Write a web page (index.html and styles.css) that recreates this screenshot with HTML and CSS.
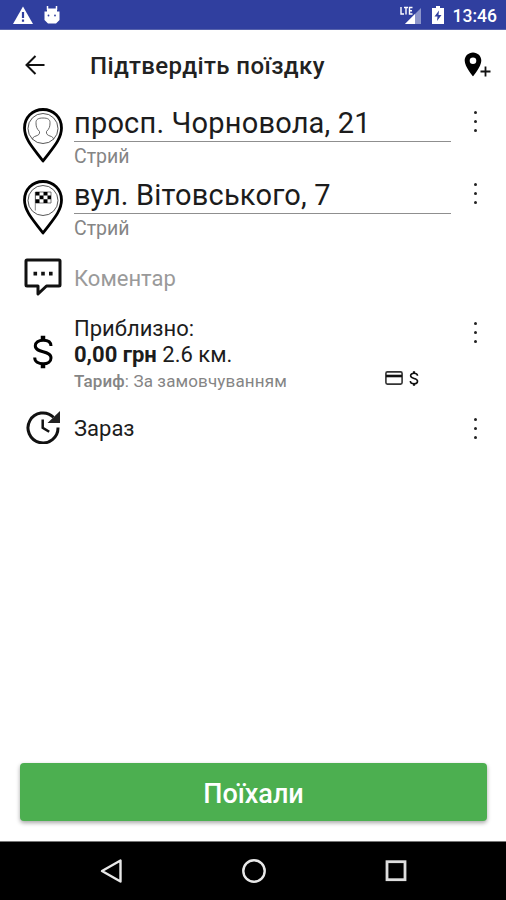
FILE: index.html
```
<!DOCTYPE html>
<html lang="uk">
    <head>
        <meta charset="utf-8">
        <title>Підтвердіть поїздку</title>
        <link rel="stylesheet" href="styles.css">
    </head>
    <body>
        <div class="status">
            <div class="status-left">
                <svg width="20" height="18" viewBox="0 0 20 18"><path d="M10 .5 20 18H0z" fill="#fff"/><path d="M10 6v6M10 13.5v2.2" stroke="#303f9f" stroke-width="2.2"/></svg>
                <svg width="16" height="18" viewBox="0 0 16 18"><path d="M3.500 0v4M12.500 0v4" stroke="#fff" stroke-width="1.5"/><path d="M3 2.5h10v3h2.5V14L12 17.500H4L.5 14V5.500H3z" fill="#fff"/><circle cx="4.500" cy="9.500" r=".9" fill="#303f9f"/><circle cx="11" cy="9.500" r=".9" fill="#303f9f"/></svg>
            </div>
            <div class="status-right">
                <svg width="22" height="19" viewBox="0 0 22 19"><path d="M21 2v16H5z" fill="#8c95ca"/><path d="M15 8v10H5z" fill="#fff"/><path d="M1 1v7h3M4 1.500h4M6 1.500V8.500M12.500 1.500H9.500V8h3M9.500 4.700h2.500" fill="none" stroke="#fff" stroke-width="1.400"/></svg>
                <svg width="12" height="18" viewBox="0 0 12 18"><path d="M4 0h4v2h4v16H0V2h4z" fill="#fff"/><path d="M7 4.500 2.500 10.500H5.500L5 15 9.500 9H6.500z" fill="#303f9f"/></svg>
                <span class="clock">13:46</span>
            </div>
        </div>
        <header>
            <svg class="back" width="20" height="20" viewBox="0 0 20 20"><path d="M19.500 10H2M10.500 1 1.500 10l9 9" fill="none" stroke="#111" stroke-width="2"/></svg>
            <h1>Підтвердіть поїздку</h1>
            <svg class="add" width="28" height="26" viewBox="0 0 28 26"><path d="M9 .5C4.300.5.7 4.100.7 8.700.7 14.500 9 24.300 9 24.300s8.300-9.800 8.300-15.600C17.300 4.100 13.700.5 9 .5zm0 5a3.300 3.300 0 1 1 0 6.600 3.300 3.300 0 0 1 0-6.600z" fill="#000" fill-rule="evenodd"/><path d="M16.500 19.500h10M21.500 14.500v10" stroke="#111" stroke-width="1.800"/></svg>
        </header>
        <main>
            <div class="row address">
                <svg class="icon pin" width="40" height="55" viewBox="0 0 40 55">
                    <path d="M20 1.500C9.500 1.500 1.500 9.600 1.500 20 1.500 32 12 42 20 53 28 42 38.500 32 38.500 20 38.500 9.600 30.500 1.500 20 1.500z" fill="#fff" stroke="#000" stroke-width="2.800" stroke-linejoin="round"/>
                    <circle cx="20" cy="20.500" r="15" fill="none" stroke="#444" stroke-width=".9"/>
                    <path d="M9.500 31.500c0-2 1.500-3 3.500-3.500 2.500-.8 4-2 3.500-4.500-3-3-3.500-5-3.500-9 0-3 2-4.500 7-4.500s7 1.500 7 4.500c0 4-.5 6-3.500 9-.5 2.500 1 3.700 3.500 4.500 2 .5 3.500 1.500 3.500 3.500" fill="none" stroke="#555" stroke-width=".9"/>
                </svg>
                <div class="content">
                    <p class="street">просп. Чорновола, 21</p>
                    <p class="city">Стрий</p>
                </div>
                <div class="more"><i></i><i></i><i></i></div>
            </div>
            <div class="row address">
                <svg class="icon pin" width="40" height="55" viewBox="0 0 40 55">
                    <path d="M20 1.500C9.500 1.500 1.500 9.600 1.500 20 1.500 32 12 42 20 53 28 42 38.500 32 38.500 20 38.500 9.600 30.500 1.500 20 1.500z" fill="#fff" stroke="#000" stroke-width="2.800" stroke-linejoin="round"/>
                    <circle cx="20" cy="20.500" r="15" fill="none" stroke="#444" stroke-width=".9"/>
                    <path d="M12.300 12v18.500" stroke="#888" stroke-width="1"/>
                    <path d="M12.500 12h15.500v11H12.500z" fill="#fff" stroke="#555" stroke-width=".8"/>
                    <path d="M12.500 12h4v3.600h-4zM20.500 12h4v3.600h-4zM16.500 15.600h4v3.700h-4zM24.500 15.600h3.500v3.700h-3.500zM12.500 19.300h4v3.700h-4zM20.500 19.300h4v3.700h-4z"/>
                </svg>
                <div class="content">
                    <p class="street">вул. Вітовського, 7</p>
                    <p class="city">Стрий</p>
                </div>
                <div class="more"><i></i><i></i><i></i></div>
            </div>
            <div class="row comment">
                <svg class="icon" width="38" height="38" viewBox="0 0 38 38"><path d="M3 2h32q1 0 1 1v24q0 1-1 1H22.500L14 36V28H3q-1 0-1-1V3q0-1 1-1z" fill="none" stroke="#111" stroke-width="3" stroke-linejoin="round"/><path d="M9.500 13.800h3.600v3.600H9.500zM17.200 13.800h3.600v3.600h-3.600zM25 13.800h3.600v3.600H25z" fill="#111"/></svg>
                <p class="content">Коментар</p>
            </div>
            <div class="row price">
                <svg class="icon" width="20" height="34" viewBox="0 0 20 34"><path d="M18 11C18 7 14.500 5.200 10.200 5.200 5.500 5.200 2.300 7.500 2.300 10.800c0 8 15.700 4 15.700 12.200 0 3.500-3.200 5.800-7.800 5.800C5.500 28.800 1.700 26.800 1.700 22.500" fill="none" stroke="#000" stroke-width="3"/><path d="M10 .8v4.500M10 28.800v4.500" stroke="#000" stroke-width="4.500"/></svg>
                <div class="content">
                    <p class="approx">Приблизно:</p>
                    <p class="sum"><b>0,00 грн</b> 2.6 км.</p>
                    <div class="tariff">
                        <p><b>Тариф</b>: За замовчуванням</p>
                        <div class="pay">
                            <svg width="18" height="14" viewBox="0 0 18 14"><rect x=".9" y=".9" width="16.200" height="12.200" rx="1.500" fill="#fff" stroke="#333" stroke-width="1.600"/><path d="M1 5h16" stroke="#111" stroke-width="2.600"/></svg>
                            <svg width="10" height="15" viewBox="0 0 20 34"><path d="M18 11C18 7 14.500 5.200 10.200 5.200 5.500 5.200 2.300 7.500 2.300 10.800c0 8 15.700 4 15.700 12.200 0 3.500-3.200 5.800-7.800 5.800C5.500 28.800 1.700 26.800 1.700 22.500" fill="none" stroke="#111" stroke-width="3.600"/><path d="M10 .8v4.500M10 28.800v4.500" stroke="#111" stroke-width="5"/></svg>
                        </div>
                    </div>
                </div>
                <div class="more"><i></i><i></i><i></i></div>
            </div>
            <div class="row time">
                <svg class="icon" width="36" height="34" viewBox="0 0 36 34"><path d="M28.500 7.200A15 15 0 1 0 33 17.500" fill="none" stroke="#111" stroke-width="3"/><path d="M35 1v12H22.500z" fill="#222"/><path d="M17.700 9.500v8.300l6.500 4" fill="none" stroke="#111" stroke-width="2.500"/></svg>
                <p class="content">Зараз</p>
                <div class="more"><i></i><i></i><i></i></div>
            </div>
        </main>
        <button class="go">Поїхали</button>
        <nav>
            <svg width="24" height="26" viewBox="0 0 24 26"><path d="M20.500 2.500v21L2 13z" fill="none" stroke="#e8e8e8" stroke-width="2.400" stroke-linejoin="round"/></svg>
            <svg width="24" height="26" viewBox="0 0 24 26"><circle cx="12" cy="13" r="10.700" fill="none" stroke="#e8e8e8" stroke-width="2.400"/></svg>
            <svg width="24" height="26" viewBox="0 0 24 26"><rect x="3" y="3.700" width="18" height="18" fill="none" stroke="#dedede" stroke-width="2.800"/></svg>
        </nav>
    </body>
</html>
```
FILE: styles.css
```
*{
margin: 0;
padding: 0;
box-sizing: border-box;
font-family: Roboto, "Noto Sans", sans-serif;
}
body{
display: flex;
flex-direction: column;
height: 100vh;
background: #fff;
color: #1c1c1c;
overflow: hidden;
}
svg{
display: block;
flex: none;
}
p, h1{
white-space: nowrap;
}
.status{
display: flex;
justify-content: space-between;
height: 30px;
padding: 0 9px 0 13px;
background: #303f9f;
border-bottom: 1px solid #5763ac;
}
.status-left{
display: flex;
gap: 11px;
padding-top: 6px;
}
.status-right{
display: flex;
align-items: flex-start;
gap: 10px;
padding-top: 6px;
}
.clock{
color: #fff;
font-size: 17.5px;
font-weight: 500;
line-height: 20px;
margin-left: -1px;
}
header{
display: flex;
align-items: center;
height: 70px;
padding: 0 14px 0 25px;
}
header h1{
flex: 1;
margin-left: 45px;
padding-top: 2px;
font-size: 24px;
font-weight: 500;
letter-spacing: 0.4px;
color: #222;
}
main{
flex: 1;
padding: 5px 20px 0;
}
.row{
display: grid;
grid-template-columns: 46px 377px 1fr;
column-gap: 8px;
width: 486px;
}
.icon{
justify-self: center;
}
.more{
display: flex;
flex-direction: column;
gap: 6px;
width: 3px;
margin-left: 15px;
}
.more i{
width: 3px;
height: 3px;
border-radius: 50%;
background: #222;
}
.address{
height: 72px;
}
.address .pin{
margin-top: 3px;
}
.address .more{
margin-top: 6px;
}
.street{
height: 37px;
border-bottom: 1px solid #8f8f8f;
font-size: 29px;
line-height: 36px;
letter-spacing: 0.18px;
}
.city{
font-size: 19.5px;
line-height: 30px;
color: #858585;
}
.comment{
height: 60px;
padding-top: 9px;
}
.comment .content{
font-size: 22px;
line-height: 41px;
color: #9a9a9a;
}
.price{
height: 94px;
}
.price .icon{
margin-top: 26px;
}
.price .content{
padding-top: 7px;
}
.price .more{
margin-top: 13px;
}
.approx, .sum{
font-size: 22px;
line-height: 26px;
}
.tariff{
display: flex;
justify-content: space-between;
align-items: center;
height: 26px;
padding-right: 32px;
font-size: 17px;
letter-spacing: 0.14px;
color: #858585;
}
.tariff b{
font-weight: 500;
}
.pay{
display: flex;
align-items: center;
gap: 6px;
margin-top: -6px;
}
.time .icon{
margin-top: 7px;
}
.time .content{
font-size: 22px;
line-height: 51px;
}
.time .more{
margin-top: 15px;
}
.go{
flex: none;
height: 58px;
margin: 0 19px 20px 20px;
padding-top: 4px;
border: none;
border-radius: 4px;
background: #4caf50;
box-shadow: 0 2px 4px rgba(0,0,0,0.35);
color: #fff;
font-size: 27px;
font-weight: 500;
}
nav{
display: flex;
justify-content: center;
align-items: center;
gap: 118px;
height: 59px;
padding-left: 2px;
flex: none;
background: #000;
border-top: 1px solid #777;
}
```
